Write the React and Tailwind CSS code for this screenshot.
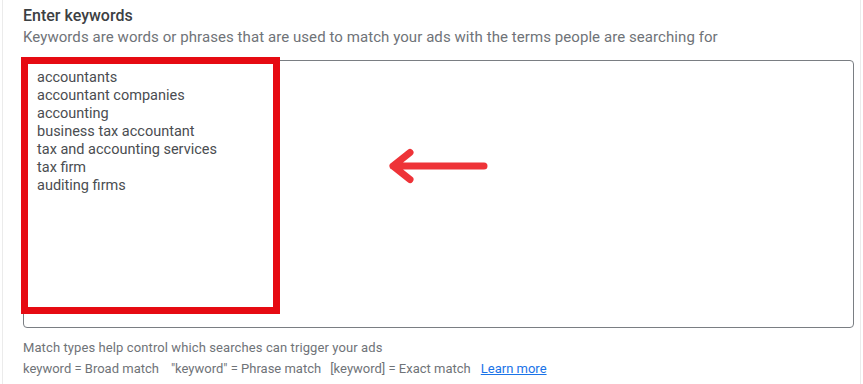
export default function App() {
  const keywords = [
    "accountants",
    "accountant companies",
    "accounting",
    "business tax accountant",
    "tax and accounting services",
    "tax firm",
    "auditing firms",
  ];
  return (
    <div className="w-[863px] h-[384px] bg-white px-[2px] overflow-hidden" style={{ fontFamily: "Roboto, 'Liberation Sans', sans-serif" }}>
      <div className="relative h-full border-x border-[#ebebeb] pl-[20px] pr-[6px] pt-[5px]">
        <div className="text-[16px] leading-[22px] font-medium text-[#3c4043]">Enter keywords</div>
        <div className="text-[15px] leading-[20px] text-[#6f7378] tracking-[0.07px]">
          Keywords are words or phrases that are used to match your ads with the terms people are searching for
        </div>
        <div className="mt-[13px] w-[831px] h-[268px] rounded-[4px] border border-[#7a7e83] pl-[13px] pt-[8px]">
          {keywords.map((k) => (
            <div key={k} className="text-[14.5px] leading-[18px] text-[#4a4d51]">{k}</div>
          ))}
        </div>
        <div className="mt-[9px] text-[13px] leading-[21px] text-[#6f7378] tracking-[0.1px]">
          Match types help control which searches can trigger your ads
        </div>
        <div className="text-[13px] leading-[21px] text-[#6f7378] whitespace-nowrap">
          <span>keyword = Broad match</span>
          <span className="ml-[12px]">"keyword" = Phrase match</span>
          <span className="ml-[9px]">[keyword] = Exact match</span>
          <span className="ml-[10px] text-[#1a73e8] underline">Learn more</span>
        </div>

        <div className="absolute left-[18px] top-[57px] w-[259px] h-[257px] border-[7px] border-[#e60a12]"></div>
        <svg className="absolute left-[379px] top-[145px]" width="110" height="42" viewBox="0 0 110 42">
          <path d="M102 21 H11 M28 7.5 L11 21 L28 34.5" fill="none" stroke="#ee3338" strokeWidth="7" strokeLinecap="round" strokeLinejoin="round" />
        </svg>
      </div>
    </div>
  );
}
